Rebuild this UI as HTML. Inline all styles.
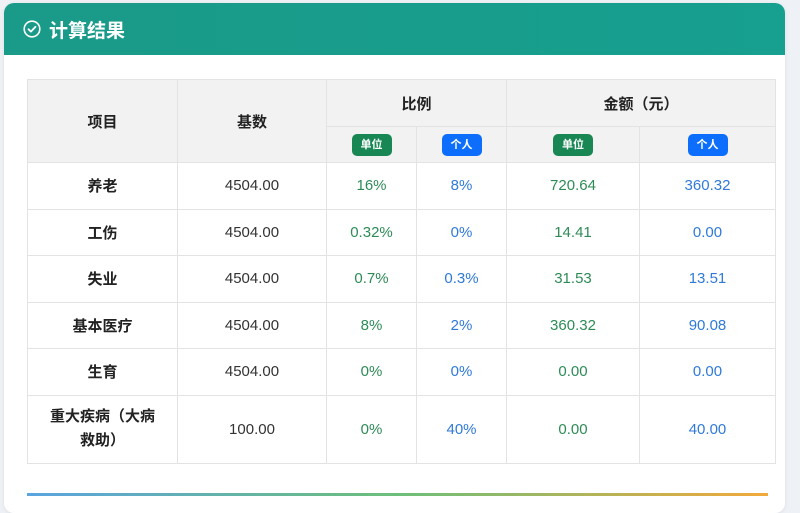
<!DOCTYPE html>
<html><head><meta charset="utf-8"><style>
*{margin:0;padding:0;box-sizing:border-box}
body{width:800px;height:499px;background:#eef1f5;font-family:"Liberation Sans","Noto Sans CJK SC",sans-serif;overflow:hidden;position:relative}
.card{position:absolute;left:4px;top:3px;width:781px;height:510px;background:#fff;border-radius:10px;overflow:hidden;box-shadow:0 1px 4px rgba(0,0,0,.08)}
.hd{height:52px;background:linear-gradient(90deg,#1a9a88,#179f8f);color:#fff;font-size:19px;font-weight:bold;display:flex;align-items:center;padding-left:19px}
.hd svg{margin-right:8px}
table{position:absolute;left:23px;top:76px;border-collapse:collapse;width:749px;font-size:15px}
td,th{border:1px solid #e3e3e3;text-align:center;vertical-align:middle}
th{background:#f2f2f2;font-weight:bold;color:#222;font-size:15px}
td{color:#333;height:46.5px}
td.n{font-weight:bold;color:#222}
.g{color:#2e8b57}.b{color:#2f7ad9}
.bd{display:inline-block;width:40px;height:22px;line-height:22px;border-radius:5px;color:#fff;font-size:11px;font-weight:bold}
.bg{background:#198754}.bb{background:#0d6efd}
.line{position:absolute;left:23px;top:490px;width:741px;height:3px;background:linear-gradient(90deg,#5aa4e0,#6cbf7a 50%,#f2a93b)}
</style></head><body>
<div class="card">
<div class="hd"><svg width="18" height="18" viewBox="0 0 18 18"><circle cx="9" cy="9" r="7.8" fill="none" stroke="#fff" stroke-width="1.6"/><path d="M5.5 9.2l2.4 2.4 4.6-4.8" fill="none" stroke="#fff" stroke-width="1.8" stroke-linecap="round" stroke-linejoin="round"/></svg>计算结果</div>
<table>
<tr style="height:47px"><th rowspan="2" style="width:150px">项目</th><th rowspan="2" style="width:149px">基数</th><th colspan="2">比例</th><th colspan="2">金额（元）</th></tr>
<tr style="height:36px"><th style="width:90px"><span class="bd bg">单位</span></th><th style="width:90px"><span class="bd bb">个人</span></th><th style="width:133px"><span class="bd bg">单位</span></th><th style="width:136px"><span class="bd bb">个人</span></th></tr>
<tr><td class="n">养老</td><td>4504.00</td><td class="g">16%</td><td class="b">8%</td><td class="g">720.64</td><td class="b">360.32</td></tr>
<tr><td class="n">工伤</td><td>4504.00</td><td class="g">0.32%</td><td class="b">0%</td><td class="g">14.41</td><td class="b">0.00</td></tr>
<tr><td class="n">失业</td><td>4504.00</td><td class="g">0.7%</td><td class="b">0.3%</td><td class="g">31.53</td><td class="b">13.51</td></tr>
<tr><td class="n">基本医疗</td><td>4504.00</td><td class="g">8%</td><td class="b">2%</td><td class="g">360.32</td><td class="b">90.08</td></tr>
<tr><td class="n">生育</td><td>4504.00</td><td class="g">0%</td><td class="b">0%</td><td class="g">0.00</td><td class="b">0.00</td></tr>
<tr style="height:68px"><td class="n" style="line-height:24px;padding:0 20px">重大疾病（大病救助）</td><td>100.00</td><td class="g">0%</td><td class="b">40%</td><td class="g">0.00</td><td class="b">40.00</td></tr>
</table>
<div class="line"></div>
</div>
</body></html>
